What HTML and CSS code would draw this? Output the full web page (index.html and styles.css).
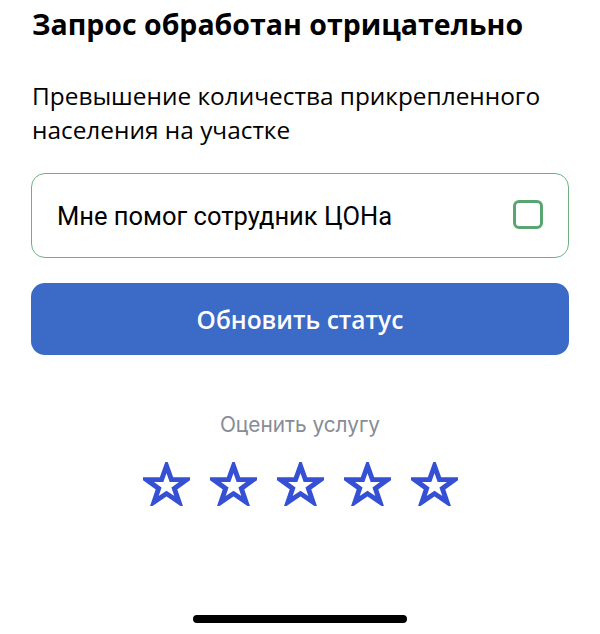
FILE: index.html
```html
<!DOCTYPE html>
<html lang="ru">
<head>
<meta charset="utf-8">
<link rel="stylesheet" href="styles.css">
</head>
<body>
<main class="page">
  <h1 class="title">Запрос обработан отрицательно</h1>
  <p class="reason">Превышение количества прикрепленного населения на участке</p>
  <label class="check-card">
    <span class="check-label">Мне помог сотрудник ЦОНа</span>
    <span class="check-box"></span>
  </label>
  <button class="btn-primary">Обновить статус</button>
  <div class="rate">
    <div class="rate-title">Оценить услугу</div>
    <div class="stars">
      <svg class="star" viewBox="0 0 48 44"><path d="M24 3.5 L29 17.5 L44.5 17.5 L32 26.5 L36.8 40.5 L24 31.8 L11.2 40.5 L16 26.5 L3.5 17.5 L19 17.5 Z"/></svg>
      <svg class="star" viewBox="0 0 48 44"><path d="M24 3.5 L29 17.5 L44.5 17.5 L32 26.5 L36.8 40.5 L24 31.8 L11.2 40.5 L16 26.5 L3.5 17.5 L19 17.5 Z"/></svg>
      <svg class="star" viewBox="0 0 48 44"><path d="M24 3.5 L29 17.5 L44.5 17.5 L32 26.5 L36.8 40.5 L24 31.8 L11.2 40.5 L16 26.5 L3.5 17.5 L19 17.5 Z"/></svg>
      <svg class="star" viewBox="0 0 48 44"><path d="M24 3.5 L29 17.5 L44.5 17.5 L32 26.5 L36.8 40.5 L24 31.8 L11.2 40.5 L16 26.5 L3.5 17.5 L19 17.5 Z"/></svg>
      <svg class="star" viewBox="0 0 48 44"><path d="M24 3.5 L29 17.5 L44.5 17.5 L32 26.5 L36.8 40.5 L24 31.8 L11.2 40.5 L16 26.5 L3.5 17.5 L19 17.5 Z"/></svg>
    </div>
  </div>
</main>
<div class="home-indicator"></div>
</body>
</html>
```
FILE: styles.css
```css
html, body {
  margin: 0;
  padding: 0;
  background: #ffffff;
}
body {
  width: 600px;
  height: 634px;
  position: relative;
  overflow: hidden;
  font-family: "Open Sans", "Noto Sans", sans-serif;
  color: #000;
}
.page {
  padding: 4px 31px 0 31px;
  display: flex;
  flex-direction: column;
}
.title {
  margin: 0 0 0 1px;
  font-size: 28.5px;
  font-weight: 700;
  line-height: 40px;
  letter-spacing: 0;
  white-space: nowrap;
}
.reason {
  margin: 35px 0 0 1px;
  font-size: 24.4px;
  font-weight: 400;
  line-height: 34px;
}
.check-card {
  margin-top: 26px;
  height: 85px;
  box-sizing: border-box;
  border: 1.5px solid #6fb083;
  border-radius: 14px;
  display: flex;
  align-items: center;
  justify-content: space-between;
  padding: 0 25px 0 25px;
}
.check-label {
  font-family: Roboto, "Noto Sans", sans-serif;
  font-size: 25.5px;
  color: #000;
}
.check-box {
  width: 30px;
  height: 29px;
  box-sizing: border-box;
  border: 3px solid #5aa672;
  border-radius: 6px;
  margin-bottom: 2px;
}
.btn-primary {
  margin-top: 25px;
  height: 72px;
  border: none;
  border-radius: 14px;
  background: #3b6ac7;
  color: #fff;
  font-family: "Open Sans", sans-serif;
  font-size: 24.5px;
  font-weight: 600;
  padding: 0;
}
.rate {
  margin-top: 58px;
  display: flex;
  flex-direction: column;
  align-items: center;
}
.rate-title {
  font-family: Inter, Roboto, sans-serif;
  font-size: 20.8px;
  color: #878c96;
  line-height: 24px;
}
.stars {
  margin-top: 25px;
  display: flex;
  gap: 20px;
}
.star {
  width: 47px;
  height: 44px;
  fill: none;
  stroke: #3550d2;
  stroke-width: 5;
  stroke-linejoin: miter;
  stroke-miterlimit: 10;
}
.home-indicator {
  position: absolute;
  left: 193px;
  top: 615px;
  width: 214px;
  height: 8px;
  border-radius: 4px;
  background: #000;
}
```
